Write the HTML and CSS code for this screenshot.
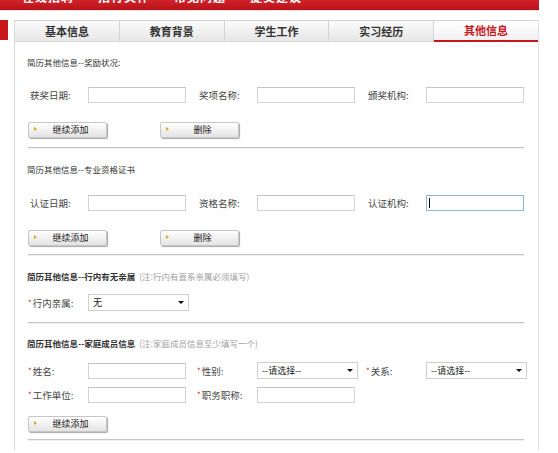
FILE: index.html
```html
<!DOCTYPE html>
<html lang="zh-CN">
<head>
<meta charset="utf-8">
<title>简历其他信息</title>
<link rel="stylesheet" href="styles.css">
</head>
<body>
<div class="topbar">
  <ul class="nav">
    <li>在线招聘</li>
    <li>招行关怀</li>
    <li>常见问题</li>
    <li>提交建议</li>
  </ul>
</div>
<div class="main">
  <div class="side"><div class="side-mark"></div></div>
  <div class="panel">
    <div class="tabs">
      <div class="tab">基本信息</div>
      <div class="tab">教育背景</div>
      <div class="tab">学生工作</div>
      <div class="tab">实习经历</div>
      <div class="tab active">其他信息</div>
    </div>
    <div class="content">
      <h3 class="sec-title t1">简历其他信息--奖励状况:</h3>
      <div class="grid r1">
        <label class="lbl">获奖日期:</label><input class="txt" type="text">
        <label class="lbl">奖项名称:</label><input class="txt" type="text">
        <label class="lbl">颁奖机构:</label><span class="focuswrap plain"><input class="txt" type="text"></span>
      </div>
      <div class="btns b1">
        <button class="btn" type="button">继续添加</button>
        <button class="btn" type="button">删除</button>
      </div>
      <div class="sep s1"></div>

      <h3 class="sec-title t2">简历其他信息--专业资格证书</h3>
      <div class="grid r2">
        <label class="lbl">认证日期:</label><input class="txt" type="text">
        <label class="lbl">资格名称:</label><input class="txt" type="text">
        <label class="lbl">认证机构:</label><span class="focuswrap caret"><input class="txt focused" type="text"></span>
      </div>
      <div class="btns b2">
        <button class="btn" type="button">继续添加</button>
        <button class="btn" type="button">删除</button>
      </div>
      <div class="sep s2"></div>

      <h3 class="sec-title bold t3">简历其他信息--行内有无亲属 <span class="note">(注:行内有直系亲属必须填写)</span></h3>
      <div class="grid r3">
        <label class="lbl star"><span class="req">*</span>行内亲属:</label>
        <span class="selwrap"><select class="sel"><option>无</option><option>有</option></select></span>
      </div>
      <div class="sep s3"></div>

      <h3 class="sec-title bold t4">简历其他信息--家庭成员信息 <span class="note">(注:家庭成员信息至少填写一个)</span></h3>
      <div class="grid r4">
        <label class="lbl star"><span class="req">*</span>姓名:</label><input class="txt" type="text">
        <label class="lbl star"><span class="req">*</span>性别:</label>
        <span class="selwrap"><select class="sel"><option>--请选择--</option></select></span>
        <label class="lbl star"><span class="req">*</span>关系:</label>
        <span class="selwrap"><select class="sel"><option>--请选择--</option></select></span>
      </div>
      <div class="grid r5">
        <label class="lbl star"><span class="req">*</span>工作单位:</label><input class="txt" type="text">
        <label class="lbl star"><span class="req">*</span>职务职称:</label><input class="txt" type="text">
      </div>
      <div class="btns b4">
        <button class="btn" type="button">继续添加</button>
      </div>
      <div class="sep s4"></div>
    </div>
  </div>
</div>
</body>
</html>
```
FILE: styles.css
```css
html, body {
  margin: 0;
  padding: 0;
  background: #ffffff;
}
body {
  font-family: "Noto Sans CJK SC", "Liberation Sans", sans-serif;
  color: #333333;
}

/* top red navigation (cut off by the screenshot edge) */
.topbar {
  width: 539px;
  height: 10px;
  overflow: hidden;
  background: linear-gradient(#d2232a, #b8121a);
  border-bottom: 1px solid #ecdede;
}
.nav {
  list-style: none;
  margin: -11px 0 0 22px;
  padding: 0;
  display: flex;
}
.nav li {
  flex: none;
  width: 76px;
  white-space: nowrap;
  color: #ffffff;
  font-weight: bold;
  font-size: 12px;
  line-height: 16px;
  letter-spacing: 1px;
}

.main {
  display: flex;
  margin-top: 9px;
}
.side {
  width: 14px;
  flex: none;
}
.side-mark {
  width: 8px;
  height: 20px;
  background: #c8161d;
}

.panel {
  width: 523px;
  border-left: 1px solid #d9d9d9;
  border-right: 1px solid #e2e2e2;
  padding-bottom: 9px;
}

/* tabs */
.tabs {
  display: flex;
  height: 22px;
  border-top: 1px solid #d4d4d4;
  box-sizing: border-box;
}
.tab {
  flex: 1;
  text-align: center;
  font-size: 11px;
  font-weight: bold;
  line-height: 20px;
  color: #333333;
  background: linear-gradient(#fbfbfb, #e6e6e6);
  border-right: 1px solid #d2d2d2;
  border-bottom: 1px solid #dadada;
}
.tab:last-child {
  border-right: 0;
}
.tab.active {
  color: #c8161d;
  background: linear-gradient(#ffffff, #f1f1f1);
  border-bottom: 2px solid #c8161d;
  line-height: 19px;
}

.content {
  padding: 13px 14px 0 13px;
}

.sec-title {
  margin: 0 0 0 -1px;
  font-size: 8.5px;
  line-height: 14px;
  font-weight: normal;
  color: #333333;
}
.sec-title.bold {
  font-weight: bold;
}
.note {
  font-weight: normal;
  color: #a0a0a0;
  margin-left: 2px;
}
.t2 { margin-top: 13px; }
.t3 { margin-top: 13px; }
.t4 { margin-top: 12px; }

.grid {
  display: grid;
  grid-template-columns: 60px 109px 60px 109px 60px auto;
  align-items: center;
}
.r1 { margin-top: 18px; }
.r2 { margin-top: 19px; }
.r3 { margin-top: 11px; }
.r4 { margin-top: 12px; }
.r5 { margin-top: 8px; }

.lbl {
  font-size: 9.5px;
  color: #444444;
  padding-left: 2px;
  line-height: 16px;
}
.lbl.star {
  padding-left: 0;
}
.req {
  color: #e02020;
  font-size: 8px;
  vertical-align: 1px;
  margin-right: 1px;
}

.txt {
  display: block;
  box-sizing: border-box;
  width: 98px;
  height: 16px;
  margin: 0;
  padding: 0 3px;
  border: 1px solid #d3d3d3;
  border-top-color: #c4c4c4;
  background: #ffffff;
  font-size: 10px;
  outline: none;
}
.focuswrap {
  position: relative;
  display: block;
  width: 98px;
  height: 16px;
}
.focuswrap.caret::after {
  content: "";
  position: absolute;
  left: 3px;
  top: 3px;
  width: 1px;
  height: 10px;
  background: #111111;
}
.txt.focused {
  border-color: #8fb4d9;
}

.selwrap {
  position: relative;
  display: block;
  width: 101px;
  height: 17px;
}
.selwrap::after {
  content: "";
  position: absolute;
  right: 5px;
  top: 7px;
  border-left: 3px solid transparent;
  border-right: 3px solid transparent;
  border-top: 3px solid #111111;
  pointer-events: none;
}
.sel {
  display: block;
  appearance: none;
  -webkit-appearance: none;
  box-sizing: border-box;
  width: 101px;
  height: 17px;
  margin: 0;
  padding: 0 0 0 4px;
  border: 1px solid #cfcfcf;
  border-radius: 0;
  background: #ffffff;
  font-family: "Noto Sans CJK SC", "Liberation Sans", sans-serif;
  font-size: 9px;
  color: #222222;
  outline: none;
}

.btns {
  display: flex;
  gap: 53px;
}
.b1 { margin-top: 19px; }
.b2 { margin-top: 19px; }
.b4 { margin-top: 13px; }

.btn {
  position: relative;
  box-sizing: border-box;
  width: 79px;
  height: 16px;
  margin: 0;
  padding: 0 0 0 6px;
  border: 1px solid #c6c6c6;
  border-radius: 2px;
  background: linear-gradient(#ffffff, #e3e3e3);
  box-shadow: 1px 1px 1px #a8a8a8;
  font-family: "Noto Sans CJK SC", "Liberation Sans", sans-serif;
  font-size: 9px;
  line-height: 14px;
  color: #222222;
  text-align: center;
}
.btn::before {
  content: "";
  position: absolute;
  left: 5px;
  top: 4px;
  border-top: 2px solid transparent;
  border-bottom: 2px solid transparent;
  border-left: 3px solid #e0a818;
}

.sep {
  height: 0;
  border-top: 1px solid #c6c6c6;
  border-bottom: 1px solid #efefef;
}
.s1 { margin-top: 9px; }
.s2 { margin-top: 8px; }
.s3 { margin-top: 11px; }
.s4 { margin-top: 7px; }
```
